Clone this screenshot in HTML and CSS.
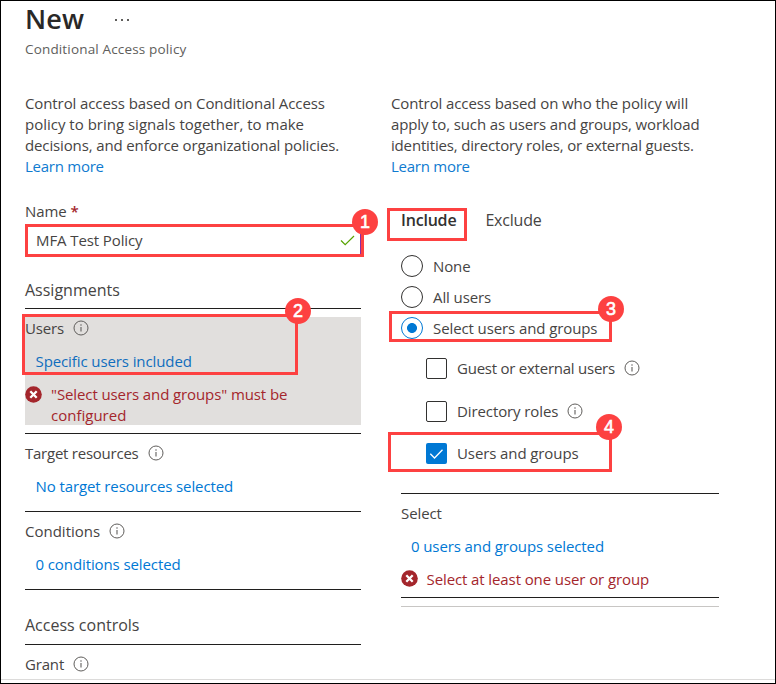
FILE: index.html
```html
<!DOCTYPE html>
<html lang="en">
<head>
<meta charset="utf-8">
<title>New - Conditional Access policy</title>
<link rel="stylesheet" href="styles.css">
</head>
<body>
<svg class="defs" aria-hidden="true">
  <symbol id="info" viewBox="0 0 16 16"><circle cx="8" cy="8" r="7" fill="none" stroke="#605e5c" stroke-width="1"/><path d="M8 7v4.5" stroke="#605e5c" stroke-width="1.1"/><circle cx="8" cy="5" r=".75" fill="#605e5c"/></symbol>
  <symbol id="error" viewBox="0 0 17 17"><circle cx="8.5" cy="8.5" r="8.3" fill="#a4262c"/><path d="M5.3 5.3l6.4 6.4M11.7 5.3l-6.4 6.4" stroke="#fff" stroke-width="2.3"/></symbol>
</svg>
<div class="frame">
  <header class="header">
    <div class="title-row"><h1>New</h1><svg class="more" viewBox="0 0 16 4"><path d="M1 1h2v2H1zM7 1h2v2H7zM13 1h2v2h-2z" fill="#605e5c"/></svg></div>
    <p class="subtitle">Conditional Access policy</p>
  </header>
  <main class="columns">
    <section class="policy">
      <p class="intro">Control access based on Conditional Access<br><span class="wide">policy to bring signals together, to make</span><br><span class="tight">decisions, and enforce organizational policies.</span><br><a class="learn">Learn more</a></p>
      <div class="label name-label">Name <span class="required">*</span></div>
      <div class="name-input"><span>MFA Test Policy</span><svg class="valid" viewBox="0 0 15 11"><path d="M1 5.5l4.2 4.2L14 1" fill="none" stroke="#57a300" stroke-width="1.2"/></svg></div>
      <h2 class="group assignments">Assignments</h2>
      <div class="item selected">
        <div class="label"><span class="short">Users</span><svg class="info"><use href="#info"/></svg></div>
        <a class="link">Specific users included</a>
        <div class="error"><svg><use href="#error"/></svg><span>"Select users and groups" must be<br><span class="wide">configured</span></span></div>
      </div>
      <div class="item">
        <div class="label"><span class="shorter">Target resources</span><svg class="info"><use href="#info"/></svg></div>
        <a class="link">No target resources selected</a>
      </div>
      <div class="item">
        <div class="label"><span class="wide">Conditions</span><svg class="info"><use href="#info"/></svg></div>
        <a class="link">0 conditions selected</a>
      </div>
      <h2 class="group access">Access controls</h2>
      <div class="item last">
        <div class="label"><span class="short">Grant</span><svg class="info"><use href="#info"/></svg></div>
      </div>
    </section>
    <section class="scope">
      <p class="intro">Control access based on who the policy will<br><span class="tight">apply to, such as users and groups, workload</span><br><span class="short">identities, directory roles, or external guests.</span><br><a class="learn">Learn more</a></p>
      <div class="options">
        <nav class="tabs"><span class="active">Include</span><span>Exclude</span></nav>
        <div class="radio"><i></i><span>None</span></div>
        <div class="radio"><i></i><span>All users</span></div>
        <div class="radio on"><i></i><span>Select users and groups</span></div>
        <div class="checks">
          <div class="check"><i></i><span class="shorter">Guest or external users</span><svg class="info"><use href="#info"/></svg></div>
          <div class="check"><i></i><span>Directory roles</span><svg class="info"><use href="#info"/></svg></div>
          <div class="check on"><i><svg viewBox="0 0 21 21"><path d="M4.3 10.8l4.2 4.2 8-8.2" fill="none" stroke="#fff" stroke-width="1.3"/></svg></i><span>Users and groups</span></div>
        </div>
        <div class="picker">
          <div class="label">Select</div>
          <a class="link">0 users and groups selected</a>
          <div class="error"><svg><use href="#error"/></svg><span>Select at least one user or group</span></div>
        </div>
        <div class="end"></div>
      </div>
    </section>
  </main>
  <div class="footer-line"></div>
  <div class="mark mark-name"><b>1</b></div>
  <div class="mark mark-users"><b>2</b></div>
  <div class="mark mark-include"></div>
  <div class="mark mark-radio"><b>3</b></div>
  <div class="mark mark-check"><b>4</b></div>
</div>
</body>
</html>
```
FILE: styles.css
```css
* { box-sizing: border-box; }
body, h1, h2, p { margin: 0; }
body {
  background: #fff;
  color: #464443;
  font: 15px/21px "Open Sans", "Noto Sans", sans-serif;
  letter-spacing: -0.1px;
}
.defs { position: absolute; width: 0; height: 0; }
.frame {
  position: relative;
  display: flex;
  flex-direction: column;
  width: 776px;
  height: 684px;
  border: 1px solid #000;
  overflow: hidden;
}
.header { height: 92px; padding-left: 24px; }
.title-row { display: flex; align-items: center; height: 35px; gap: 30px; }
h1 { font-size: 27px; line-height: 35px; font-weight: 600; color: #292827; letter-spacing: 0.2px; }
.more { width: 16px; height: 4px; margin-top: 3px; }
.subtitle { margin-top: 3px; font-size: 13.5px; line-height: 20px; color: #605e5c; letter-spacing: 0.16px; }
.columns { display: flex; height: 585px; }
.policy { width: 336px; margin-left: 24px; }
.scope { width: 328px; margin-left: 30px; }
.intro { height: 84px; white-space: nowrap; }
.wide { letter-spacing: 0; }
.tight { letter-spacing: -0.13px; }
.short { letter-spacing: -0.17px; }
.shorter { letter-spacing: -0.24px; }
.learn { color: #0f7bd0; letter-spacing: -0.25px; }
.label { display: flex; align-items: center; height: 21px; white-space: nowrap; }
.info { width: 16px; height: 16px; margin: -1px 0 0 9px; flex: none; }
.name-label { margin-top: 24px; }
.required { color: #a4262c; margin-left: 4px; font-weight: 600; }
.name-input {
  display: flex;
  align-items: center;
  justify-content: space-between;
  height: 33px;
  margin-top: 2px;
  padding: 0 6px 0 11px;
}
.valid { width: 15px; height: 11px; }
.group { height: 29px; font-size: 16px; font-weight: 400; letter-spacing: 0; border-bottom: 1px solid #201f1e; }
.assignments { margin-top: 23px; }
.access { margin-top: 25px; height: 30px; }
.item { height: 78px; padding-top: 9px; border-bottom: 1px solid #201f1e; }
.item.last { border: 0; height: 30px; }
.item.selected {
  height: 125px;
  padding-top: 9px;
  background: linear-gradient(#e1dfdd, #e1dfdd) 0 8px / 100% 108px no-repeat;
}
.link { display: block; height: 21px; margin: 12px 0 0 10.5px; color: #0078d4; white-space: nowrap; }
.selected .link { color: #106ebe; }
.error { display: flex; gap: 9px; margin-top: 12px; color: #a4262c; white-space: nowrap; }
.error svg { width: 17px; height: 17px; margin-top: 2px; flex: none; }
.options { margin-left: 10px; }
.tabs { display: flex; gap: 29px; height: 46px; margin-top: 33px; font-size: 16px; letter-spacing: -0.2px; line-height: 20px; }
.tabs .active { font-weight: 600; letter-spacing: -0.2px; color: #323130; }
.radio { display: flex; align-items: center; height: 31px; padding-bottom: 10px; }
.radio i { width: 22px; height: 22px; margin: -1px 10px 0 0; border: 1px solid #323130; border-radius: 50%; flex: none; }
.radio.on i { border-color: #0078d4; background: radial-gradient(circle, #0078d4 4.6px, transparent 5.3px); }
.checks { margin: 9px 0 0 25px; }
.check { display: flex; align-items: center; height: 21px; margin-bottom: 21.5px; white-space: nowrap; }
.check i { width: 21px; height: 21px; margin-right: 10px; border: 1px solid #323130; border-radius: 2px; flex: none; }
.check.on i { border: 0; background: #0078d4; }
.check i svg { display: block; width: 21px; height: 21px; }
.picker { height: 105px; margin-top: 29px; border-top: 1px solid #201f1e; border-bottom: 1px solid #201f1e; padding-top: 9px; }
.picker .link { margin-left: 10px; }
.picker .error svg { margin: 1px 0 0 -0.5px; }
.end { height: 9px; border-bottom: 1px solid #c8c6c4; }
.footer-line { height: 1px; margin-top: 1px; background: #dcdbda; }

/* Numbered callouts laid over the form */
.mark { position: absolute; border: 3px solid #fd4141; }
.mark b {
  position: absolute;
  width: 26px;
  height: 26px;
  border-radius: 50%;
  background: #fd4141;
  color: #fff;
  font: 400 18px/26px "Liberation Sans", sans-serif;
  -webkit-text-stroke: 0.6px #fff;
  letter-spacing: 0;
  text-align: center;
}
.mark-name { left: 24px; top: 223px; width: 339px; height: 33px; box-shadow: inset -1px 0 #8a2da5; }
.mark-name b { right: -17px; top: -18px; }
.mark-users { left: 21px; top: 313px; width: 276px; height: 61px; }
.mark-users b { right: -16px; top: -19px; }
.mark-include { left: 386px; top: 207px; width: 80px; height: 33px; }
.mark-radio { left: 388px; top: 310px; width: 223px; height: 31px; }
.mark-radio b { right: -15px; top: -18px; }
.mark-check { left: 387px; top: 431px; width: 224px; height: 40px; }
.mark-check b { right: -13px; top: -21px; }
```
